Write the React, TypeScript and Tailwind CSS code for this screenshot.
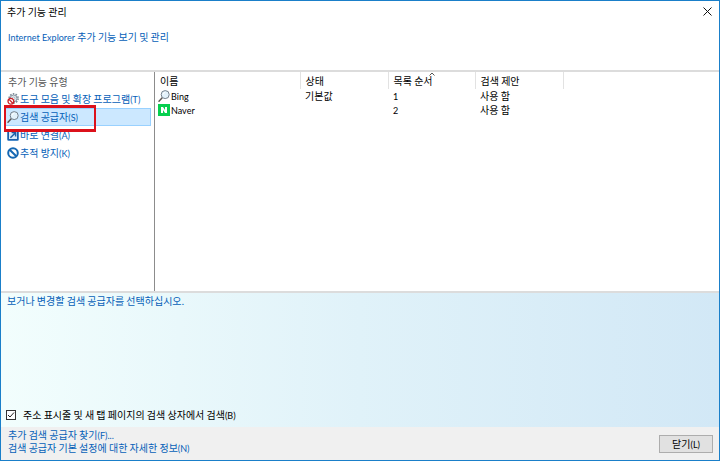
import type { ReactNode } from 'react';

type Category = { label: string; accessKey: string; icon: ReactNode; selected?: boolean };
type Provider = {
  name: string;
  icon: ReactNode;
  status: string;
  order: number;
  suggest: string;
};

/* ─── icons ───────────────────────────────────────────────── */
const SearchIcon = () => (
  <svg viewBox="0 0 12 12" className="h-3 w-3 shrink-0" aria-hidden="true">
    <path d="M1 11.2 4.2 7.8" stroke="#5b5550" strokeWidth="1.4" strokeLinecap="round" />
    <circle cx="7.2" cy="4.6" r="4" fill="#e3f2fb" stroke="#76818c" strokeWidth="1" />
    <path d="M5 4.4a2.4 2.4 0 0 1 2.2-2" fill="none" stroke="#fff" strokeWidth="1" />
  </svg>
);

const ToolbarIcon = () => (
  <svg viewBox="0 0 12 12" className="h-3 w-3 shrink-0" aria-hidden="true">
    <circle cx="6.6" cy="5.4" r="4.5" fill="none" stroke="#7c8a96" strokeWidth="1.6" strokeDasharray="1.6 1.23" />
    <circle cx="6.6" cy="5.4" r="3.4" fill="#dfe7ed" stroke="#8795a1" strokeWidth="1" />
    <circle cx="6.6" cy="5.4" r="1.3" fill="#fff" stroke="#8795a1" strokeWidth="0.6" />
    <circle cx="3.9" cy="8.3" r="2.9" fill="#fff" stroke="#cc2027" strokeWidth="1.3" />
    <path d="m2 6.4 3.8 3.8" stroke="#cc2027" strokeWidth="1.3" />
  </svg>
);

const AcceleratorIcon = () => (
  <svg viewBox="0 0 12 12" className="h-3 w-3 shrink-0" aria-hidden="true">
    <rect x="0.5" y="0.5" width="11" height="11" rx="1" fill="#1d5fa8" stroke="#4b8bc9" />
    <rect x="2" y="2" width="8" height="8" fill="#d9ebfa" />
    <path d="M3.4 8.8 8.2 4M4.6 3.4h4v4" fill="none" stroke="#1d5fa8" strokeWidth="1.5" />
  </svg>
);

const BlockIcon = () => (
  <svg viewBox="0 0 12 12" className="h-3 w-3 shrink-0" aria-hidden="true">
    <circle cx="6" cy="6" r="4.8" fill="#fff" stroke="#1467b3" strokeWidth="2" />
    <path d="m2.7 2.7 6.6 6.6" stroke="#1467b3" strokeWidth="2" />
  </svg>
);

const NaverIcon = () => (
  <svg viewBox="0 0 12 12" className="h-3 w-3 shrink-0" aria-hidden="true">
    <rect width="12" height="12" fill="#06cf4f" />
    <path d="M3 9V3h2l2 3V3h2v6H7L5 6v3z" fill="#fff" />
  </svg>
);

// Latin runs sit a size below the Hangul around them
const Latin = ({ children }: { children: ReactNode }) => (
  <span className="font-[Lato,sans-serif] text-[9px] leading-none">{children}</span>
);

const categories: Category[] = [
  { label: '도구 모음 및 확장 프로그램', accessKey: '(T)', icon: <ToolbarIcon /> },
  { label: '검색 공급자', accessKey: '(S)', icon: <SearchIcon />, selected: true },
  { label: '바로 연결', accessKey: '(A)', icon: <AcceleratorIcon /> },
  { label: '추적 방지', accessKey: '(K)', icon: <BlockIcon /> },
];

const providers: Provider[] = [
  { name: 'Bing', icon: <SearchIcon />, status: '기본값', order: 1, suggest: '사용 함' },
  { name: 'Naver', icon: <NaverIcon />, status: '', order: 2, suggest: '사용 함' },
];

function Sidebar() {
  return (
    <nav className="w-[154px] shrink-0 border-r border-[#8c8c8c] pt-[3px] pr-[3px] pl-1">
      <h2 className="h-[15px] pl-[3px] leading-[14px] text-[#555]">추가 기능 유형</h2>
      <ul>
        {categories.map(({ label, accessKey, icon, selected }) => (
          <li key={label} className="relative">
            <button
              type="button"
              className={`flex h-[18px] w-full items-center gap-px border px-px whitespace-nowrap ${
                selected ? 'border-[#99d1ff] bg-[#cce8ff]' : 'border-transparent'
              }`}
            >
              {icon}
              <span>
                {label}
                <Latin>{accessKey}</Latin>
              </span>
            </button>
            {/* red marker around the active category */}
            {selected && (
              <span className="pointer-events-none absolute -top-[3px] -left-px z-10 h-[27px] w-[92px] border-[3px] border-x-2 border-[#dc111b]" />
            )}
          </li>
        ))}
      </ul>
    </nav>
  );
}

function ProviderTable() {
  return (
    <div className="min-w-0 flex-1">
      <table className="w-[408px] table-fixed border-collapse text-left text-black">
        <colgroup>
          <col className="w-[145px]" />
          <col className="w-[88px]" />
          <col className="w-[87px]" />
          <col className="w-[88px]" />
        </colgroup>
        <thead>
          <tr className="h-[17px]">
            <th className="border-r border-[#e2e2e2] pl-[5px] font-normal">이름</th>
            <th className="border-r border-[#e2e2e2] pl-[5px] font-normal">상태</th>
            <th className="relative border-r border-[#e2e2e2] pl-[5px] font-normal">
              목록 순서
              <svg viewBox="0 0 6 4" className="absolute inset-x-0 top-0 mx-auto h-1 w-1.5" aria-hidden="true">
                <path d="m0.5 3.5 2.5-2.5 2.5 2.5" fill="none" stroke="#555" />
              </svg>
            </th>
            <th className="border-r border-[#e2e2e2] pl-[5px] font-normal">검색 제안</th>
          </tr>
        </thead>
        <tbody>
          {providers.map(({ name, icon, status, order, suggest }) => (
            <tr key={name} className="h-[14px]">
              <td className="pl-[3px]">
                <span className="flex items-center gap-px">
                  {icon}
                  <Latin>{name}</Latin>
                </span>
              </td>
              <td className="pl-[5px]">{status}</td>
              <td className="pl-[5px]">
                <Latin>{order}</Latin>
              </td>
              <td className="pl-[5px]">{suggest}</td>
            </tr>
          ))}
        </tbody>
      </table>
    </div>
  );
}

export default function App() {
  return (
    <div className="flex min-h-screen flex-col border border-[#1a7fc9] bg-white font-['Noto_Sans_CJK_KR',sans-serif] text-[10px] leading-[14px] text-[#0560b8]">
      <header className="flex h-[21px] items-center justify-between pr-[7px] pl-1.5 text-black">
        <h1>추가 기능 관리</h1>
        <button type="button" aria-label="닫기">
          <svg viewBox="0 0 9 9" className="h-[9px] w-[9px]" aria-hidden="true">
            <path d="m0.5 0.5 8 8m0-8-8 8" stroke="#111" />
          </svg>
        </button>
      </header>

      <div className="h-12 px-[7px] pt-2">
        <a href="#addons">
          <Latin>Internet Explorer</Latin> 추가 기능 보기 및 관리
        </a>
      </div>

      <main className="flex flex-1 border-y-2 border-[#dcdcdc]">
        <Sidebar />
        <ProviderTable />
      </main>

      <section className="flex h-[134px] flex-col justify-between bg-linear-to-r from-[#f2fefd] via-[#e0f2f9] to-[#d2e8f6] px-[5px] pt-px pb-[5px]">
        <p className="pl-px">보거나 변경할 검색 공급자를 선택하십시오.</p>
        <label className="flex items-center gap-[7px] self-start text-black">
          <span className="relative flex">
            <input
              type="checkbox"
              defaultChecked
              className="peer h-[10px] w-[10px] appearance-none border border-[#333] bg-white"
            />
            <svg
              viewBox="0 0 10 10"
              className="pointer-events-none absolute inset-0 hidden h-[10px] w-[10px] peer-checked:block"
              aria-hidden="true"
            >
              <path d="m2 5 2 2 4-4.5" fill="none" stroke="#222" />
            </svg>
          </span>
          <span>
            주소 표시줄 및 새 탭 페이지의 검색 상자에서 검색<Latin>(B)</Latin>
          </span>
        </label>
      </section>

      <footer className="flex h-[33px] items-center justify-between bg-[#f0f0f0] pr-1.5 pl-[7px]">
        <div className="flex flex-col items-start self-start pt-px leading-[13px]">
          <a href="#find">
            추가 검색 공급자 찾기<Latin>(F)...</Latin>
          </a>
          <a href="#learn">
            검색 공급자 기본 설정에 대한 자세한 정보<Latin>(N)</Latin>
          </a>
        </div>
        <button
          type="button"
          className="flex h-[18px] w-[54px] items-center justify-center border border-[#adadad] bg-[#e1e1e1] text-black"
        >
          <span>
            닫기<Latin>(L)</Latin>
          </span>
        </button>
      </footer>
    </div>
  );
}
